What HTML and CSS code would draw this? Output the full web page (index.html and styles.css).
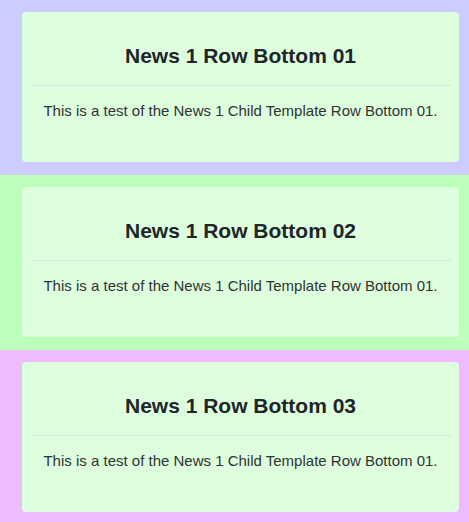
FILE: index.html
```html
<!DOCTYPE html>
<html>
<head>
<meta charset="utf-8">
<link rel="stylesheet" href="styles.css">
</head>
<body>
<section class="band band-1">
  <div class="card">
    <div class="card-head"><h2 class="card-title">News 1 Row Bottom 01</h2></div>
    <div class="card-body"><p>This is a test of the News 1 Child Template Row Bottom 01.</p></div>
  </div>
</section>
<section class="band band-2">
  <div class="card">
    <div class="card-head"><h2 class="card-title">News 1 Row Bottom 02</h2></div>
    <div class="card-body"><p>This is a test of the News 1 Child Template Row Bottom 01.</p></div>
  </div>
</section>
<section class="band band-3">
  <div class="card">
    <div class="card-head"><h2 class="card-title">News 1 Row Bottom 03</h2></div>
    <div class="card-body"><p>This is a test of the News 1 Child Template Row Bottom 01.</p></div>
  </div>
</section>
</body>
</html>
```
FILE: styles.css
```css
html, body {
  margin: 0;
  padding: 0;
}
body {
  font-family: "Liberation Sans", Arial, sans-serif;
  color: #212529;
}
.band {
  padding: 12px 10px 13px 22px;
}
.band-1 { background: #ccccff; }
.band-2 { background: #bbffbb; }
.band-3 { background: #eebbff; }
.card {
  background: #ddffdd;
  border-radius: 4px;
  height: 150px;
  padding: 0 8px;
  box-sizing: border-box;
}
.card-head {
  height: 74px;
  border-bottom: 1px solid #d2e8e6;
  box-sizing: border-box;
  display: flex;
  align-items: flex-start;
  justify-content: center;
}
.card-title {
  margin: 32px 0 0;
  font-size: 21px;
  line-height: 24px;
  font-weight: bold;
  text-align: center;
}
.card-body p {
  margin: 16px 0 0;
  font-size: 15px;
  line-height: 18px;
  text-align: center;
  color: #2f3433;
}
```
